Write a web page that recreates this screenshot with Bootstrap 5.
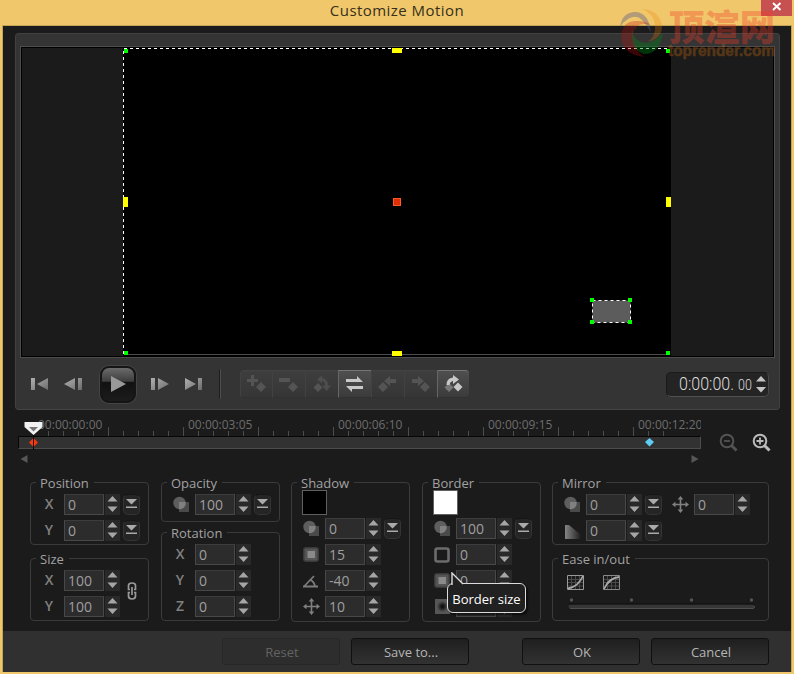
<!DOCTYPE html>
<html lang="en">
<head>
<meta charset="utf-8">
<meta name="viewport" content="width=device-width, initial-scale=1">
<title>Customize Motion</title>
<link href="https://cdn.jsdelivr.net/npm/bootstrap@5.3.0/dist/css/bootstrap.min.css" rel="stylesheet">
<style>
body{width:794px;height:674px;overflow:hidden;background:#f0c76a;font-family:"Open Sans","Noto Sans",sans-serif;font-size:13px;line-height:20px;color:#a2a2a2}
svg{display:block;flex:none}
.titlebar{height:25px;color:#37301c;font-size:15px;line-height:20px;letter-spacing:.45px}
.btn-x{width:31px;height:16px;top:0;right:2px;background:#c75050;border:0;padding:0}
.frame{margin:0 2px 0 2px;border:1px solid #c3a355;height:647px;background:#1b1b1b}
.player{margin:7px 11px 0 12px;height:377px;background:#343434;border:1px solid #414141;border-bottom-color:#444;border-radius:4px;padding:12px 4px 0 4px}
.screen{height:312px;border:1px solid #4c4c4c;background:#000;padding:1px}
.screen-in{background:#1b1b1b;height:308px;padding-left:101px}
.stage{width:548px;height:308px;background:#000}
.stage svg{overflow:visible}
.controls{height:52px;padding-left:10px}
.play{width:36px;height:37px;border-radius:9px;background:linear-gradient(#6b6b6b,#3e3e3e 40%,#111 44%,#1c1c1c);border:2px solid #151515;box-shadow:0 0 0 1px #444}
.sep{width:2px;height:30px;background:#4d4d4d;border-left:1px solid #1f1f1f}
.keys{height:28px}
.kb{width:33px;height:28px;background:linear-gradient(#3e3e3e,#363636);border:1px solid #303030;border-top-color:#434343;border-left-color:#424242;border-right:0;color:#545454}
.kb.on{background:linear-gradient(#4f4f4f,#3b3b3b);color:#c8c8c8;border-top-color:#757575;border-left-color:#666}
.kb:first-child{border-radius:4px 0 0 4px;width:32px}
.kb:last-child{border-radius:0 4px 4px 0;width:32px}
.tc{width:103px;height:25px;background:#242424;border:1px solid #1a1a1a;border-bottom-color:#505050;border-right-color:#484848;border-radius:5px;color:#ddd;margin-right:6px;padding-left:12px;padding-right:1px}
.tc .big{font:300 18px/24px Roboto,sans-serif;transform:scaleX(.89);transform-origin:0 50%;width:59px}
.tc .sm{font:300 15px/26px Roboto,sans-serif;transform:scaleX(.83);transform-origin:0 50%;width:18px;padding-top:1px}
.timeline{height:64px;padding-left:15px}
.track{width:683px}
.ruler{height:26px;overflow:hidden;padding:6px 0 0 20px;color:#6d6d6d;font-size:12px;line-height:18px;
background:repeating-linear-gradient(90deg,#4c4c4c 0 1px,transparent 1px 75px) 15px 100%/100% 9px no-repeat,repeating-linear-gradient(90deg,#4c4c4c 0 1px,transparent 1px 15px) 15px 100%/645px 5px no-repeat}
.ruler span{flex:0 0 150px;white-space:nowrap}
.bar{height:13px;background:#323232;border:1px solid #060606;border-bottom-color:#4c4c4c;border-right-color:#4c4c4c}
.scroller{padding:4px 2px 0 2px}
.head-pin{left:0;top:-1px}
.panels{padding:8px 0 0 27px;gap:11px}
.colm{width:119px}
.colm:nth-child(even){margin-left:1px}
.mir{width:217px}
.grp{border:1px solid #3b3b3b;border-radius:4px}
.cap{background:#1b1b1b;padding:0 5px 0 4px;margin:-10px 0 0 5px;height:20px;align-self:flex-start;font-size:13px;white-space:nowrap}
.line{height:20px;margin-bottom:6px}
.lbl{width:18px;margin-right:6px;text-align:center;font-weight:600;font-size:14px;color:#808080}
.lbl svg{margin:2px 0 0 2px}
.pad-a{padding-left:9px}
.num{width:40px;height:21px;background:#2c2c2c;border:1px solid #484848;border-top-color:#3c3c3c;padding-left:3px;font-size:14px;line-height:19px;color:#9f9f9f}
.spin{background:#292929;width:15px;height:21px;margin-left:1px}
.drop{width:17px;height:21px;margin-left:3px;background:#252525;border:1px solid #343434;border-top-color:#161616;border-radius:5px}
.drop svg{margin-top:-1px}
.sw{width:25px;height:25px;border:1px solid #606060}
.foot{height:41px;background:#303030;margin-top:9px;padding:7px 22px 0 0}
.btn-f{width:118px;height:27px;padding:0 0 0 2px;font-size:13px;line-height:24px;color:#b5b5b5;background:linear-gradient(#1f1f1f,#323232);border:1px solid #101010;border-radius:3px}
.btn-f.off{color:#636363;background:#2d2d2d;border-color:#272727}
.tip{left:447px;top:583px;width:79px;height:30px;background:#212121;border:1.5px solid #dcdcdc;border-radius:6px;color:#fff;box-shadow:2px 2px 2px #0008;line-height:31px;font-size:13px}
.tip svg{left:2px;top:-12px}
.wm{left:618px;top:0;overflow:visible}
</style>
</head>
<body class="position-relative">
<svg width="0" height="0" class="position-absolute">
<defs>
<linearGradient id="g1" x1="0" y1="0" x2="1" y2="1"><stop offset="0" stop-color="#b0b0b0"/><stop offset="1" stop-color="#6c6c6c"/></linearGradient>
<linearGradient id="g2"><stop offset="0" stop-color="#858585"/><stop offset="1" stop-color="#202020"/></linearGradient>
<radialGradient id="g3"><stop offset=".2" stop-color="#111"/><stop offset="1" stop-color="#555"/></radialGradient>
</defs>
<symbol id="spin" viewBox="0 0 15 21"><path d="M7.500 2 12.500 7.500H2.500zM7.500 18 2.500 12.500H12.500z" fill="#a6a6a6"/></symbol>
<symbol id="drop" viewBox="0 0 15 19"><path d="M2 5H13L7.500 10.500zM2 12.500H13V14H2z" fill="#aaa"/></symbol>
<symbol id="opac" viewBox="0 0 17 17"><circle cx="6.500" cy="7" r="6.200" fill="#5e5e5e"/><path d="M6 6H16V16H6z" fill="#4a4a4a"/><path d="M6 6H12.700A6.200 6.200 0 0 1 6 13.200z" fill="#808080"/></symbol>
<symbol id="soft" viewBox="0 0 17 17"><rect x="0" y="1" width="16" height="15" rx="3" fill="#3a3a3a"/><rect x="1.500" y="2.500" width="13" height="12" rx="1" fill="#555"/><path d="M4.500 5H12V12H4.500z" fill="#8a8a8a"/></symbol>
<symbol id="ang" viewBox="0 0 17 17"><path d="M0 14.500H15M1 14.500 11 4M7 7.500Q11.500 10 12 14.500" fill="none" stroke="#7c7c7c" stroke-width="1.800"/></symbol>
<symbol id="move" viewBox="0 0 17 17"><path d="M8.500 2V15M2 8.500H15" stroke="#808080" stroke-width="1.600"/><path d="M8.500 0 11.300 3.500H5.700zM8.500 17 5.700 13.500H11.300zM0 8.500 3.500 5.700V11.300zM17 8.500 13.500 11.300V5.700z" fill="#808080"/></symbol>
<symbol id="fade" viewBox="0 0 17 17"><path d="M1 3H5L16.500 12.500V17H1z" fill="url(#g2)"/></symbol>
<symbol id="box" viewBox="0 0 17 17"><rect x="1.500" y="2.500" width="13" height="13" rx="2" fill="none" stroke="#6c6c6c" stroke-width="2.600"/></symbol>
<symbol id="inner" viewBox="0 0 17 17"><rect x="1" y="1" width="15" height="15" fill="#565656"/><rect x="3" y="3" width="11" height="11" rx="3" fill="url(#g3)"/></symbol>
</svg>

<header class="titlebar text-center position-relative">Customize Motion
  <button class="btn-x position-absolute" aria-label="Close"><svg width="31" height="16"><path d="M12 3 19.500 10M19.500 3 12 10" stroke="#fff" stroke-width="1.900"/></svg></button>
</header>

<main class="frame">
  <section class="player">
    <div class="screen"><div class="screen-in"><div class="stage">
      <svg width="548" height="308">
        <path d="M1 .5H544M.5 3V306" fill="none" stroke="#fff" stroke-dasharray="3 3"/>
        <path d="M4 306.500H544" stroke="#4c4c4c"/>
        <path d="M1 1H5V5H1zM543 1H547V5H543zM1 303H5V307H1zM543 303H547V307H543z" fill="#0f0"/>
        <path d="M269 0H279V5H269zM269 303H279V308H269zM0 149H5V159H0zM543 149H548V159H543z" fill="#ff0"/>
        <rect x="270.500" y="150.500" width="7" height="7" fill="#e02e00" stroke="#ff5a2c"/>
        <rect x="469.500" y="252.500" width="38" height="22" fill="#5c5c5c" stroke="#fff" stroke-dasharray="3 3"/>
        <path d="M467 250H471V254H467zM505 250H509V254H505zM467 272H471V276H467zM505 272H509V276H505z" fill="#0f0"/>
      </svg>
    </div></div></div>

    <div class="controls d-flex align-items-center">
      <svg width="20" height="16"><path d="M1 2H5V14H1zM18 2V14L7 8z" fill="url(#g1)"/></svg>
      <svg width="21" height="16" style="margin-left:13px"><path d="M12 2V14L1 8zM15 2H19V14H15z" fill="url(#g1)"/></svg>
      <div class="play d-flex align-items-center justify-content-center" style="margin-left:16px"><svg width="16" height="18"><path d="M1 1 16 9 1 17z" fill="#999"/></svg></div>
      <svg width="20" height="16" style="margin-left:14px"><path d="M1 2H5V14H1zM8 2 19 8 8 14z" fill="url(#g1)"/></svg>
      <svg width="20" height="16" style="margin-left:14px"><path d="M1 2 12 8 1 14zM14 2H18V14H14z" fill="url(#g1)"/></svg>
      <div class="sep" style="margin-left:15px"></div>
      <div class="keys d-flex" style="margin-left:19px">
        <div class="kb"><svg width="32" height="26"><path d="M6 8H10V4H13V8H17V11H13V15H10V11H6zM20 11 25 16 20 21 15 16z" fill="currentColor"/></svg></div>
        <div class="kb"><svg width="32" height="26"><path d="M6 7H17V11H6zM20 11 25 16 20 21 15 16z" fill="currentColor"/></svg></div>
        <div class="kb"><svg width="32" height="26"><path d="M12 12 16.500 16.500 12 21 7.500 16.500z" fill="currentColor"/><path d="M11 8.500 16 4.500V7Q22 8 22 14.500H25L20.500 20 16 14.500H19Q19 10.500 16 10V12.500z" fill="currentColor" opacity=".75"/></svg></div>
        <div class="kb on"><svg width="32" height="26"><path d="M7 8H18V5L24 11H7zM24 15V18H13V21L7 15z" fill="currentColor"/></svg></div>
        <div class="kb"><svg width="32" height="26"><path d="M11 11 16 16 11 21 6 16zM12 10 18 5V8H24V12H18V15z" fill="currentColor"/></svg></div>
        <div class="kb"><svg width="32" height="26"><path d="M20 11 25 16 20 21 15 16zM19 10 13 5V8H7V12H13V15z" fill="currentColor"/></svg></div>
        <div class="kb on"><svg width="32" height="26"><path d="M11 12 15.500 16.500 11 21 6.500 16.500z" fill="#777"/><path d="M20 11.500 24.500 16 20 20.500 15.500 16z" fill="currentColor"/><path d="M8.500 14Q8.500 7 15 6.500V4L21 8.500 15 13V10Q12 10.500 11.500 14z" fill="currentColor"/></svg></div>
      </div>
      <div class="tc ms-auto d-flex align-items-center">
        <span class="big">0:00:00.</span><span class="sm">00</span>
        <svg class="ms-auto" width="12" height="20"><path d="M6 2 11 7.500H1zM6 18.500 1 13H11z" fill="#c4c4c4"/></svg>
      </div>
    </div>
  </section>

  <section class="timeline d-flex">
    <div class="track position-relative">
      <div class="ruler d-flex"><span>00:00:00:00</span><span>00:00:03:05</span><span>00:00:06:10</span><span>00:00:09:15</span><span>00:00:12:20</span></div>
      <div class="bar"></div>
      <div class="scroller d-flex justify-content-between">
        <svg width="8" height="12"><path d="M7.500 2V10L.5 6z" fill="#575757"/></svg>
        <svg width="8" height="12"><path d="M.5 2V10L7.500 6z" fill="#575757"/></svg>
      </div>
      <svg class="position-absolute head-pin" width="683" height="42">
        <path d="M15.500 26V41" stroke="#000"/>
        <path d="M6.500 13H24.500V18L15.500 26 6.500 18z" fill="#f2f2f2"/><path d="M11 18H20L15.500 22.500z" fill="#777"/>
        <path d="M15.500 29 20 33.500 15.500 38 11 33.500z" fill="#f23a14"/><path d="M15.500 28V39" stroke="#300"/>
        <path d="M631.500 29 636 33 631.500 37.500 627 33z" fill="#5ecdf2"/>
      </svg>
    </div>
    <div class="d-flex" style="padding:23px 0 0 18px;gap:14px">
      <svg width="19" height="20"><circle cx="8" cy="8" r="6.300" fill="none" stroke="#535353" stroke-width="2"/><path d="M5 8H11" stroke="#535353" stroke-width="1.800"/><path d="M12.500 12.500 17.500 17.500" stroke="#535353" stroke-width="3"/></svg>
      <svg width="19" height="20"><circle cx="8" cy="8" r="6.300" fill="none" stroke="#bbb" stroke-width="2"/><path d="M4.500 8H11.500M8 4.500V11.500" stroke="#bbb" stroke-width="1.800"/><path d="M12.500 12.500 17.500 17.500" stroke="#bbb" stroke-width="3"/></svg>
    </div>
  </section>

  <section class="panels d-flex">
    <div class="colm">
      <div class="grp d-flex flex-column" style="height:63px"><div class="cap">Position</div>
        <div class="pad-a" style="padding-top:1px">
          <div class="line d-flex"><span class="lbl">X</span><span class="num">0</span><span class="spin"><svg width="15" height="21"><use href="#spin"/></svg></span><span class="drop"><svg width="15" height="19"><use href="#drop"/></svg></span></div>
          <div class="line d-flex"><span class="lbl">Y</span><span class="num">0</span><span class="spin"><svg width="15" height="21"><use href="#spin"/></svg></span><span class="drop"><svg width="15" height="19"><use href="#drop"/></svg></span></div>
        </div>
      </div>
      <div class="grp d-flex flex-column" style="height:63px;margin-top:13px"><div class="cap">Size</div>
        <div class="d-flex"><div class="pad-a" style="padding-top:1px">
          <div class="line d-flex"><span class="lbl">X</span><span class="num">100</span><span class="spin"><svg width="15" height="21"><use href="#spin"/></svg></span></div>
          <div class="line d-flex"><span class="lbl">Y</span><span class="num">100</span><span class="spin"><svg width="15" height="21"><use href="#spin"/></svg></span></div>
        </div>
        <svg width="10" height="18" style="margin:13px 0 0 7px" viewBox="0 0 10 18"><g fill="none" stroke="#999" stroke-width="1.700"><path d="M3 7.500H1.500V3.500Q1.500 1 5 1T8.500 3.500V7.500H7M3 10.500H1.500V14Q1.500 17 5 17T8.500 14V10.500H7M5 5V13"/></g></svg></div>
      </div>
    </div>

    <div class="colm">
      <div class="grp d-flex flex-column" style="height:40px"><div class="cap">Opacity</div>
        <div class="pad-a" style="padding-top:1px">
          <div class="line d-flex"><span class="lbl"><svg width="17" height="17"><use href="#opac"/></svg></span><span class="num">100</span><span class="spin"><svg width="15" height="21"><use href="#spin"/></svg></span><span class="drop"><svg width="15" height="19"><use href="#drop"/></svg></span></div>
        </div>
      </div>
      <div class="grp d-flex flex-column" style="height:89px;margin-top:10px"><div class="cap">Rotation</div>
        <div class="pad-a" style="padding-top:1px">
          <div class="line d-flex"><span class="lbl">X</span><span class="num">0</span><span class="spin"><svg width="15" height="21"><use href="#spin"/></svg></span></div>
          <div class="line d-flex"><span class="lbl">Y</span><span class="num">0</span><span class="spin"><svg width="15" height="21"><use href="#spin"/></svg></span></div>
          <div class="line d-flex"><span class="lbl">Z</span><span class="num">0</span><span class="spin"><svg width="15" height="21"><use href="#spin"/></svg></span></div>
        </div>
      </div>
    </div>

    <div class="colm">
      <div class="grp d-flex flex-column" style="height:140px"><div class="cap">Shadow</div>
        <div class="pad-a" style="margin-top:-3px">
          <div class="sw position-relative" style="background:#000;margin:0 0 3px 1px"></div>
          <div class="line d-flex"><span class="lbl"><svg width="17" height="17"><use href="#opac"/></svg></span><span class="num">0</span><span class="spin"><svg width="15" height="21"><use href="#spin"/></svg></span><span class="drop"><svg width="15" height="19"><use href="#drop"/></svg></span></div>
          <div class="line d-flex"><span class="lbl"><svg width="17" height="17"><use href="#soft"/></svg></span><span class="num">15</span><span class="spin"><svg width="15" height="21"><use href="#spin"/></svg></span></div>
          <div class="line d-flex"><span class="lbl"><svg width="17" height="17"><use href="#ang"/></svg></span><span class="num">-40</span><span class="spin"><svg width="15" height="21"><use href="#spin"/></svg></span></div>
          <div class="line d-flex"><span class="lbl"><svg width="17" height="17"><use href="#move"/></svg></span><span class="num">10</span><span class="spin"><svg width="15" height="21"><use href="#spin"/></svg></span></div>
        </div>
      </div>
    </div>

    <div class="colm">
      <div class="grp d-flex flex-column" style="height:140px"><div class="cap">Border</div>
        <div class="pad-a" style="margin-top:-3px">
          <div class="sw position-relative" style="background:#fff;margin:0 0 3px 1px"></div>
          <div class="line d-flex"><span class="lbl"><svg width="17" height="17"><use href="#opac"/></svg></span><span class="num">100</span><span class="spin"><svg width="15" height="21"><use href="#spin"/></svg></span><span class="drop"><svg width="15" height="19"><use href="#drop"/></svg></span></div>
          <div class="line d-flex"><span class="lbl"><svg width="17" height="17"><use href="#box"/></svg></span><span class="num">0</span><span class="spin"><svg width="15" height="21"><use href="#spin"/></svg></span></div>
          <div class="line d-flex"><span class="lbl"><svg width="17" height="17"><use href="#soft"/></svg></span><span class="num">0</span><span class="spin"><svg width="15" height="21"><use href="#spin"/></svg></span></div>
          <div class="line d-flex"><span class="lbl"><svg width="17" height="17"><use href="#inner"/></svg></span><span class="num"></span><span class="spin"><svg width="15" height="21"><use href="#spin"/></svg></span></div>
        </div>
      </div>
    </div>

    <div class="mir">
      <div class="grp d-flex flex-column" style="height:63px"><div class="cap">Mirror</div>
        <div class="pad-a" style="padding-top:1px">
          <div class="line d-flex"><span class="lbl"><svg width="17" height="17"><use href="#opac"/></svg></span><span class="num">0</span><span class="spin"><svg width="15" height="21"><use href="#spin"/></svg></span><span class="drop"><svg width="15" height="19"><use href="#drop"/></svg></span><span class="lbl" style="margin-left:8px"><svg width="17" height="17"><use href="#move"/></svg></span><span class="num">0</span><span class="spin"><svg width="15" height="21"><use href="#spin"/></svg></span></div>
          <div class="line d-flex"><span class="lbl"><svg width="17" height="17"><use href="#fade"/></svg></span><span class="num">0</span><span class="spin"><svg width="15" height="21"><use href="#spin"/></svg></span><span class="drop"><svg width="15" height="19"><use href="#drop"/></svg></span></div>
        </div>
      </div>
      <div class="grp d-flex flex-column" style="height:63px;margin-top:13px"><div class="cap">Ease in/out</div>
        <div class="d-flex" style="padding:6px 0 0 14px;gap:19px">
          <svg width="17" height="15"><path d="M4.500 1V14M8.500 1V14M12.500 1V14M1 4.500H16M1 7.500H16M1 11H16" stroke="#4a4a4a"/><path d="M.5 .5H16.500V14.500H.5z" fill="none" stroke="#999"/><path d="M1 13.500Q11 12 16 1" fill="none" stroke="#aaa" stroke-width="1.800"/></svg>
          <svg width="17" height="15"><path d="M4.500 1V14M8.500 1V14M12.500 1V14M1 4.500H16M1 7.500H16M1 11H16" stroke="#4a4a4a"/><path d="M.5 .5H16.500V14.500H.5z" fill="none" stroke="#888"/><path d="M1 14Q6 3 16 2" fill="none" stroke="#aaa" stroke-width="1.800"/></svg>
        </div>
        <svg width="190" height="14" style="margin:7px 0 0 14px"><g fill="#555"><circle cx="4.500" cy="3" r="1.700"/><circle cx="64.500" cy="3" r="1.700"/><circle cx="124.500" cy="3" r="1.700"/><circle cx="184.500" cy="3" r="1.700"/></g><rect x="1.500" y="7.500" width="186" height="4" rx="2" fill="#363636"/><path d="M3 11.500H186Q188 11 187.500 9" fill="none" stroke="#505050"/><path d="M2 7H187" stroke="#111"/></svg>
      </div>
    </div>
  </section>

  <footer class="foot d-flex justify-content-end">
    <button class="btn btn-f off">Reset</button>
    <button class="btn btn-f" style="margin-left:11px">Save to...</button>
    <button class="btn btn-f" style="margin-left:53px">OK</button>
    <button class="btn btn-f" style="margin-left:11px">Cancel</button>
  </footer>
</main>

<div class="tip position-absolute text-center">Border size
  <svg class="position-absolute" width="16" height="13"><path d="M2 13V1L13 12" fill="#212121" stroke="#dcdcdc" stroke-width="1.400"/></svg>
</div>

<svg class="wm position-absolute pe-none" width="176" height="64">
  <path d="M2 27Q4 12 18 12Q31 13 33 33Q28 24 24 20Q18 14 10 19Q5 22 2 27z" fill="#4a5590" opacity=".38"/>
  <path d="M24 9Q42 10 44 27Q44 38 30 42Q38 36 37 24Q35 13 24 9z" fill="#f08000" opacity=".26"/>
  <path d="M14 30Q16 42 27 43Q36 43 45 33Q42 54 26 54Q12 50 14 30z" fill="#008018" opacity=".4"/>
  <path d="M33 25Q18 21 15 34Q14 48 26 57Q4 54 3 37Q4 20 20 21Q28 21 33 25z" fill="#c01010" opacity=".3"/>
  <text x="51" y="41" font-family="Noto Sans CJK SC,sans-serif" font-size="36" font-weight="900" textLength="106" lengthAdjust="spacingAndGlyphs" fill="#f03c28" opacity=".34">顶渲网</text>
  <text x="50" y="56" font-family="Liberation Sans,sans-serif" font-size="16" font-weight="700" textLength="107" lengthAdjust="spacingAndGlyphs" fill="#d07010" stroke="#d07010" stroke-width=".5" opacity=".32">toprender.com</text>
</svg>
<script src="https://cdn.jsdelivr.net/npm/bootstrap@5.3.0/dist/js/bootstrap.bundle.min.js"></script>
</body>
</html>
